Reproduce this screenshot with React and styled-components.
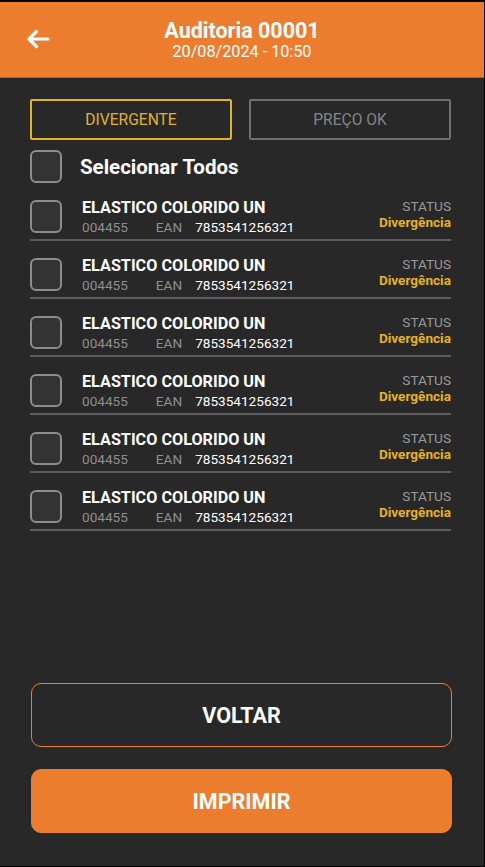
import React from 'react';
import styled, { createGlobalStyle } from 'styled-components';

const GlobalStyle = createGlobalStyle`
  html, body {
    margin: 0;
    padding: 0;
    background: #000;
  }
  body {
    font-family: Roboto, 'Liberation Sans', sans-serif;
  }
`;

const items = Array.from({ length: 6 }, (_, i) => ({
  id: i,
  name: 'ELASTICO COLORIDO UN',
  code: '004455',
  ean: '7853541256321',
  status: 'Divergência',
}));

const App = () => {
  return (
    <>
      <GlobalStyle />
      <Screen>
        <Header>
          <BackButton type='button' aria-label='voltar'>
            <svg width='24' height='20' viewBox='0 0 24 20' fill='none'>
              <path
                d='M22 10H3M10.5 2.5L3 10l7.5 7.5'
                stroke='#fff'
                strokeWidth='3.2'
                strokeLinecap='round'
                strokeLinejoin='round'
              />
            </svg>
          </BackButton>
          <HeaderText>
            <Title>Auditoria 00001</Title>
            <Subtitle>20/08/2024 - 10:50</Subtitle>
          </HeaderText>
        </Header>

        <Content>
          <Tabs>
            <Tab $active>DIVERGENTE</Tab>
            <Tab>PREÇO OK</Tab>
          </Tabs>

          <SelectAll>
            <Checkbox />
            <SelectLabel>Selecionar Todos</SelectLabel>
          </SelectAll>

          <List>
            {items.map((item) => (
              <Row key={item.id}>
                <Checkbox />
                <Info>
                  <Name>{item.name}</Name>
                  <Meta>
                    <Code>{item.code}</Code>
                    <Code>EAN</Code>
                    <Ean>{item.ean}</Ean>
                  </Meta>
                </Info>
                <Status>
                  <StatusLabel>STATUS</StatusLabel>
                  <StatusValue>{item.status}</StatusValue>
                </Status>
              </Row>
            ))}
          </List>
        </Content>

        <Footer>
          <ActionButton type='button'>VOLTAR</ActionButton>
          <ActionButton type='button' $primary>
            IMPRIMIR
          </ActionButton>
        </Footer>
      </Screen>
    </>
  );
};

const Screen = styled.div`
  box-sizing: border-box;
  width: 484px;
  height: 864px;
  margin-top: 2px;
  background: #282828;
  display: flex;
  flex-direction: column;
`;

const Header = styled.header`
  position: relative;
  height: 75px;
  background: #ec7d2f;
  border-bottom: 1px solid #b85f22;
  display: flex;
  align-items: center;
  justify-content: center;
`;

const BackButton = styled.button`
  position: absolute;
  left: 26px;
  top: 27px;
  padding: 0;
  border: none;
  background: transparent;
  display: flex;
  cursor: pointer;
`;

const HeaderText = styled.div`
  display: flex;
  flex-direction: column;
  align-items: center;
  color: #fff;
`;

const Title = styled.h1`
  margin: 0;
  font-size: 21.5px;
  font-weight: 700;
  line-height: 24px;
`;

const Subtitle = styled.span`
  font-size: 16.2px;
  line-height: 18px;
`;

const Content = styled.main`
  flex: 1;
  padding: 21px 33px 0 30px;
`;

const Tabs = styled.div`
  display: grid;
  grid-template-columns: 1fr 1fr;
  column-gap: 17px;
`;

const Tab = styled.button`
  height: 41px;
  border: 2px solid ${(p) => (p.$active ? '#e3b227' : '#6f6f6f')};
  border-radius: 2px;
  background: transparent;
  color: ${(p) => (p.$active ? '#e3b227' : '#858585')};
  font-family: Roboto, 'Liberation Sans', sans-serif;
  font-size: 15.6px;
  cursor: pointer;
`;

const Checkbox = styled.span`
  box-sizing: border-box;
  flex: none;
  width: 32px;
  height: 33px;
  border: 2px solid #8c8c8c;
  border-radius: 6px;
  background: #333333;
`;

const SelectAll = styled.label`
  display: flex;
  align-items: center;
  gap: 18px;
  margin-top: 10px;
`;

const SelectLabel = styled.span`
  color: #fff;
  font-size: 20.5px;
  font-weight: 700;
`;

const List = styled.div`
  display: flex;
  flex-direction: column;
`;

const Row = styled.div`
  height: 39px;
  padding-top: 17px;
  border-bottom: 2px solid #5c5c5c;
  display: flex;
  align-items: flex-start;
`;

const Info = styled.div`
  flex: 1;
  padding-left: 20px;
  margin-top: -2px;
`;

const Name = styled.div`
  color: #fff;
  font-size: 16.2px;
  font-weight: 700;
  line-height: 20px;
`;

const Meta = styled.div`
  display: flex;
  gap: 28px;
  font-size: 13.6px;
  line-height: 18px;
`;

const Code = styled.span`
  color: #8f8f8f;
`;

const Ean = styled.span`
  color: #fff;
  margin-left: -15px;
`;

const Status = styled.div`
  display: flex;
  flex-direction: column;
  align-items: flex-end;
  margin-top: -2px;
`;

const StatusLabel = styled.span`
  color: #9a9a9a;
  font-size: 13.6px;
  line-height: 16px;
`;

const StatusValue = styled.span`
  color: #e3b227;
  font-size: 13.6px;
  font-weight: 700;
  line-height: 16px;
`;

const Footer = styled.footer`
  display: flex;
  flex-direction: column;
  gap: 22px;
  padding: 0 32px 33px 31px;
`;

const ActionButton = styled.button`
  height: 64px;
  border-radius: 10px;
  border: 1px solid #ec7d2f;
  background: ${(p) => (p.$primary ? '#ec7d2f' : 'transparent')};
  color: #fff;
  font-family: Roboto, 'Liberation Sans', sans-serif;
  font-size: 21.5px;
  font-weight: 700;
  cursor: pointer;
`;

export default App;
